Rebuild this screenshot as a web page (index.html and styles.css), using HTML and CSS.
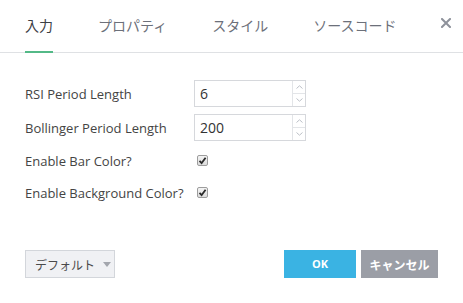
FILE: index.html
```html
<!DOCTYPE html>
<html lang="ja">
<head>
  <meta charset="UTF-8" />
  <title>インジケーター設定</title>
  <link rel="stylesheet" href="styles.css">
</head>
<body>
  <div class="dialog">
    <div class="tabs">
      <div class="tab active">入力</div>
      <div class="tab">プロパティ</div>
      <div class="tab">スタイル</div>
      <div class="tab">ソースコード</div>
      <a class="close" aria-label="閉じる">
        <svg width="10" height="10" viewBox="0 0 10 10">
          <path d="M1 1 L9 9 M9 1 L1 9" stroke="#8e929b" stroke-width="2" stroke-linecap="square" />
        </svg>
      </a>
    </div>

    <div class="inputs">
      <div class="row">
        <label>RSI Period Length</label>
        <div class="spin">
          <input type="text" value="6" />
          <div class="arrows">
            <span class="up"><svg width="7" height="4" viewBox="0 0 7 4"><path d="M0.5 3.5 L3.5 0.8 L6.5 3.5" fill="none" stroke="#bcc0c7" /></svg></span>
            <span class="down"><svg width="7" height="4" viewBox="0 0 7 4"><path d="M0.5 0.5 L3.5 3.2 L6.5 0.5" fill="none" stroke="#bcc0c7" /></svg></span>
          </div>
        </div>
      </div>
      <div class="row">
        <label>Bollinger Period Length</label>
        <div class="spin">
          <input type="text" value="200" />
          <div class="arrows">
            <span class="up"><svg width="7" height="4" viewBox="0 0 7 4"><path d="M0.5 3.5 L3.5 0.8 L6.5 3.5" fill="none" stroke="#bcc0c7" /></svg></span>
            <span class="down"><svg width="7" height="4" viewBox="0 0 7 4"><path d="M0.5 0.5 L3.5 3.2 L6.5 0.5" fill="none" stroke="#bcc0c7" /></svg></span>
          </div>
        </div>
      </div>
      <div class="row check-row">
        <label>Enable Bar Color?</label>
        <span class="check">
          <svg width="9" height="9" viewBox="0 0 9 9"><path d="M1.5 4.8 L3.6 7 L7.6 1.8" fill="none" stroke="#2b2b2b" stroke-width="1.8" /></svg>
        </span>
      </div>
      <div class="row check-row">
        <label>Enable Background Color?</label>
        <span class="check">
          <svg width="9" height="9" viewBox="0 0 9 9"><path d="M1.5 4.8 L3.6 7 L7.6 1.8" fill="none" stroke="#2b2b2b" stroke-width="1.8" /></svg>
        </span>
      </div>
    </div>

    <div class="footer">
      <button class="defaults">デフォルト<span class="caret"></span></button>
      <div class="actions">
        <button class="ok">OK</button>
        <button class="cancel">キャンセル</button>
      </div>
    </div>
  </div>
</body>
</html>
```

FILE: styles.css
```css
body {
  margin: 0;
  background: #fff;
  font-family: "Open Sans", "Noto Sans CJK JP", sans-serif;
  color: #4a4a4a;
}
.dialog {
  width: 463px;
  height: 303px;
}
.tabs {
  display: flex;
  align-items: flex-start;
  height: 52px;
  padding-left: 25px;
  border-bottom: 1px solid #dfe1e4;
}
.tab {
  flex-shrink: 0;
  white-space: nowrap;
  height: 53px;
  box-sizing: border-box;
  padding-top: 15px;
  margin-right: 45px;
  font-size: 14px;
  line-height: 20px;
  color: #6c707a;
  font-family: "Noto Sans CJK JP", sans-serif;
}
.tab.active {
  color: #3d4046;
  border-bottom: 2px solid #53b987;
}
.close {
  margin-left: auto;
  margin-right: 21px;
  padding-top: 18px;
  line-height: 0;
  cursor: pointer;
}
.inputs {
  padding: 27px 0 0 25px;
}
.row {
  display: flex;
  align-items: center;
  height: 27px;
  margin-bottom: 7px;
}
.row label {
  width: 169px;
  font-size: 13px;
  color: #444;
}
.check-row {
  height: 25px;
}
.spin {
  display: flex;
  width: 112px;
  height: 27px;
  box-sizing: border-box;
  border: 1px solid #d6d8dc;
}
.spin input {
  flex: 1;
  min-width: 0;
  border: none;
  padding: 0 0 0 5px;
  font-family: "Open Sans", sans-serif;
  font-size: 14px;
  color: #333;
  outline: none;
}
.arrows {
  display: flex;
  flex-direction: column;
  width: 12px;
  border-left: 1px solid #e3e5e8;
}
.arrows span {
  flex: 1;
  display: flex;
  align-items: center;
  justify-content: center;
  line-height: 0;
}
.arrows .up {
  border-bottom: 1px solid #e3e5e8;
}
.check {
  display: flex;
  align-items: center;
  justify-content: center;
  width: 11px;
  height: 11px;
  margin-left: 3px;
  box-sizing: border-box;
  border: 1px solid #9d9d9d;
  border-radius: 2px;
  background: linear-gradient(#f4f4f4, #dcdcdc);
}
.footer {
  display: flex;
  justify-content: space-between;
  margin-top: 45px;
  padding: 0 25px;
}
button {
  height: 28px;
  border: none;
  font-family: "Noto Sans CJK JP", sans-serif;
  cursor: pointer;
  white-space: nowrap;
}
.defaults {
  display: flex;
  align-items: center;
  width: 90px;
  padding: 0 0 0 9px;
  background: #f0f1f4;
  border: 1px solid #d3d6db;
  font-size: 12px;
  color: #4a4a4a;
}
.caret {
  margin-left: 8px;
  border-left: 4px solid transparent;
  border-right: 4px solid transparent;
  border-top: 5px solid #a3a6ad;
}
.actions {
  display: flex;
  gap: 5px;
}
.ok {
  width: 72px;
  padding-bottom: 3px;
  background: #3ab3e3;
  color: #fff;
  font-weight: bold;
  font-size: 11px;
  font-family: "Open Sans", sans-serif;
}
.cancel {
  width: 77px;
  background: #9b9ea6;
  color: #fff;
  font-weight: bold;
  font-size: 12px;
}
```
